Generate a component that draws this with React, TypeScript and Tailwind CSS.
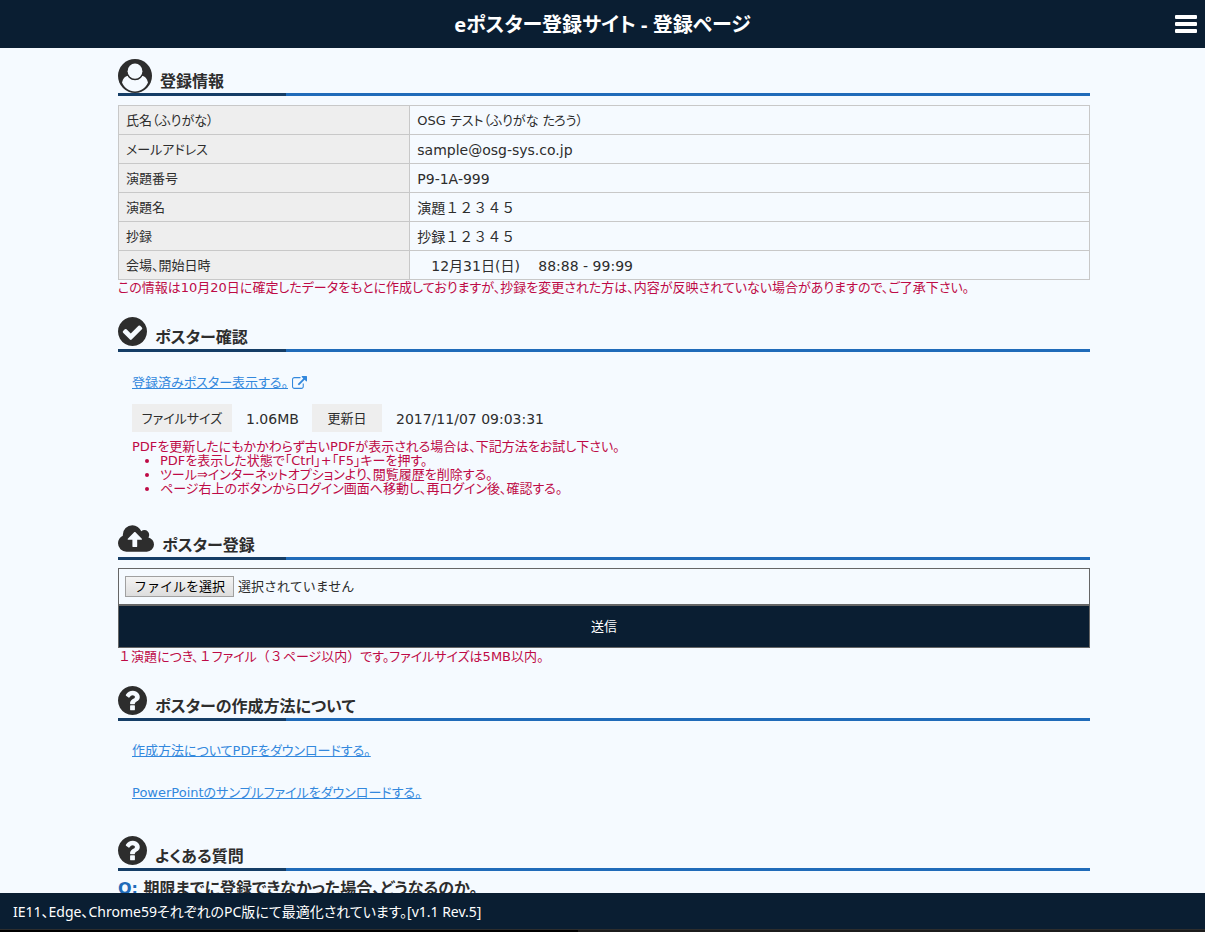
import React, { useRef, useState } from "react";

const CIRCLE =
  "m384 192q0 209-103 385.5t-279.5 279.5-385.5 103-385.5-103-279.5-279.5-103-385.5 103-385.5 279.5-279.5 385.5-103 385.5 103 279.5 279.5 103 385.5z";

const UserIcon = () => (
  <svg className="w-[34px] h-[34px] shrink-0" viewBox="0 0 34 34" aria-hidden="true">
    <circle cx="17" cy="17" r="17" fill="#2d2d2d" />
    <path d="M4 23.5C5 19.6 7 17.4 9.8 16.8C11.6 19.4 14 20.7 17 20.7C20 20.7 22.4 19.4 24.2 16.8C27 17.4 29 19.6 30 23.5C27.6 29 22.8 32.4 17 32.4C11.2 32.4 6.4 29 4 23.5Z" fill="#f5faff" />
    <ellipse cx="17" cy="12.4" rx="8.6" ry="8.9" fill="#2d2d2d" />
    <ellipse cx="17" cy="12.2" rx="7.4" ry="7.6" fill="#f5faff" />
  </svg>
);

const CheckIcon = () => (
  <svg className="w-[29px] h-[29px] mb-[3px] shrink-0" viewBox="128 128 1536 1536" fill="#2d2d2d" aria-hidden="true">
    <path d="M1412 734q0-28-18-46l-91-90q-19-19-45-19t-45 19l-408 407-226-226q-19-19-45-19t-45 19l-91 90q-18 18-18 46 0 27 18 45l362 362q19 19 45 19 27 0 46-19l543-543q18-18 18-45zm252 162q0 209-103 385.5t-279.5 279.5-385.5 103-385.5-103-279.5-279.5-103-385.5 103-385.5 279.5-279.5 385.5-103 385.5 103 279.5 279.5 103 385.5z" />
  </svg>
);

const QuestionIcon = () => (
  <svg className="w-[29px] h-[29px] mb-[3px] shrink-0" viewBox="128 128 1536 1536" fill="#2d2d2d" aria-hidden="true">
    <path
      d={
        "M1024 1376v-192q0-14-9-23t-23-9h-192q-14 0-23 9t-9 23v192q0 14 9 23t23 9h192q14 0 23-9t9-23zm256-672q0-88-55.5-163t-138.5-116-170-41q-243 0-371 213-15 24 8 42l132 100q7 6 19 6 16 0 25-12 53-68 86-92 34-24 86-24 48 0 85.5 26t37.5 59q0 38-20 61t-68 45q-63 28-115.5 86.5t-52.5 125.5v36q0 14 9 23t23 9h192q14 0 23-9t9-23q0-19 21.5-49.5t54.5-49.5q32-18 49-28.5t46-35 44.5-48 28-60.5 12.5-81z" +
        CIRCLE
      }
    />
  </svg>
);

const CloudIcon = () => (
  <svg className="w-9 h-[27px] mb-[5px] shrink-0" viewBox="0 128 1920 1408" fill="#2d2d2d" aria-hidden="true">
    <path d="M1280 864q0-14-9-23l-352-352q-9-9-23-9t-23 9l-351 351q-10 12-10 24 0 14 9 23t23 9h224v352q0 13 9.5 22.5t22.5 9.5h192q13 0 22.5-9.5t9.5-22.5v-352h224q13 0 22.5-9.5t9.5-22.5zm640 288q0 159-112.5 271.5t-271.5 112.5h-1088q-185 0-316.5-131.5t-131.5-316.5q0-130 70-240t188-165q-2-30-2-43 0-212 150-362t362-150q156 0 285.5 87t188.5 231q71-62 166-62 106 0 181 75t75 181q0 76-41 138 130 31 213.5 135.5t83.5 238.5z" />
  </svg>
);

const ExternalIcon = () => (
  <svg className="w-[15px] h-[14px] shrink-0" viewBox="0 0 1792 1664" fill="#3388dd" aria-hidden="true">
    <path d="M1408 928v320q0 119-84.5 203.5t-203.5 84.5h-832q-119 0-203.5-84.5t-84.5-203.5v-832q0-119 84.5-203.5t203.5-84.5h704q14 0 23 9t9 23v64q0 14-9 23t-23 9h-704q-66 0-113 47t-47 113v832q0 66 47 113t113 47h832q66 0 113-47t47-113v-320q0-14 9-23t23-9h64q14 0 23 9t9 23zm384-864v512q0 26-19 45t-45 19-45-19l-176-176-652 652q-10 10-23 10t-23-10l-114-114q-10-10-10-23t10-23l652-652-176-176q-19-19-19-45t19-45 45-19h512q26 0 45 19t19 45z" />
  </svg>
);

const Heading = ({ icon, children }: { icon: React.ReactNode; children: React.ReactNode }) => (
  <div>
    <h2 className="flex items-end gap-2 h-9 text-base leading-[22px] font-bold">
      {icon}
      {children}
    </h2>
    <div className="h-[3px] bg-[#206bb9]">
      <div className="h-full w-[168px] bg-[#153d66]" />
    </div>
  </div>
);

const rows = [
  { label: "氏名（ふりがな）", value: "OSG テスト（ふりがな たろう）" },
  { label: "メールアドレス", value: "sample@osg-sys.co.jp", wide: true },
  { label: "演題番号", value: "P9-1A-999", wide: true },
  { label: "演題名", value: "演題１２３４５", wide: true },
  { label: "抄録", value: "抄録１２３４５", wide: true },
  { label: "会場、開始日時", value: "　12月31日(日)　 88:88 - 99:99", wide: true },
];

const App = () => {
  const fileRef = useRef<HTMLInputElement>(null);
  const [fileName, setFileName] = useState("");

  const handleFileChange = (event: React.ChangeEvent<HTMLInputElement>) => {
    setFileName(event.target.files?.[0]?.name ?? "");
  };

  return (
    <div
      lang="ja"
      className="h-screen flex flex-col bg-[#f5faff] text-[#2d2d2d] text-[13px] leading-[14px] font-['DejaVu_Sans','Noto_Sans_CJK_JP',sans-serif] [font-feature-settings:'palt']"
    >
      <header className="grid grid-cols-[1fr_auto_1fr] items-center h-12 shrink-0 px-2 bg-[#0a1e32] text-white">
        <h1 className="col-start-2 pt-[2px] text-xl font-bold font-['Noto_Sans','Noto_Sans_CJK_JP',sans-serif]">
          eポスター登録サイト - 登録ページ
        </h1>
        <button type="button" aria-label="メニュー" className="justify-self-end">
          <svg className="w-[22px] h-[18px]" viewBox="0 0 22 18" fill="currentColor">
            <rect y="0" width="22" height="4" rx="1" />
            <rect y="7" width="22" height="4" rx="1" />
            <rect y="14" width="22" height="4" rx="1" />
          </svg>
        </button>
      </header>

      <main className="flex-1 min-h-0 overflow-hidden">
        <div className="w-full max-w-[975px] mx-auto pl-[3px] pt-[9px]">
          <section>
            <Heading icon={<UserIcon />}>登録情報</Heading>
            <table className="w-full mt-[9px] border-collapse">
              <tbody>
                {rows.map((row) => (
                  <tr key={row.label} className="h-[29px]">
                    <th scope="row" className="w-[30%] px-[7px] pt-[3px] pb-px border border-[#c8c8c8] bg-[#eeeeee] text-left font-normal">
                      {row.label}
                    </th>
                    <td
                      className={`px-[7px] pt-[3px] pb-px border border-[#c8c8c8] ${
                        row.wide ? "text-[14px] leading-[14px] [font-feature-settings:normal]" : ""
                      }`}
                    >
                      {row.value}
                    </td>
                  </tr>
                ))}
              </tbody>
            </table>
            <p className="mt-px text-[#be0a46]">
              この情報は10月20日に確定したデータをもとに作成しておりますが、抄録を変更された方は、内容が反映されていない場合がありますので、ご了承下さい。
            </p>
          </section>

          <section className="mt-[18px]">
            <Heading icon={<CheckIcon />}>ポスター確認</Heading>
            <div className="px-[14px] pt-6">
              <a href="#poster" className="inline-flex items-center gap-1 text-[#3388dd]">
                <span className="underline">登録済みポスター表示する。</span>
                <ExternalIcon />
              </a>
              <dl className="flex items-center h-7 mt-[14px] mb-2">
                <dt className="flex items-center justify-center w-[100px] h-full pt-[2px] bg-[#eeeeee]">ファイルサイズ</dt>
                <dd className="w-20 px-[14px] pt-[2px] text-[14px]">1.06MB</dd>
                <dt className="flex items-center justify-center w-[70px] h-full pt-[2px] bg-[#eeeeee]">更新日</dt>
                <dd className="px-[14px] pt-[2px] text-[14px]">2017/11/07 09:03:31</dd>
              </dl>
              <div className="text-[#be0a46]">
                <p>PDFを更新したにもかかわらず古いPDFが表示される場合は、下記方法をお試し下さい。</p>
                <ul className="list-disc pl-7">
                  <li>PDFを表示した状態で「Ctrl」+「F5」キーを押す。</li>
                  <li>ツール⇒インターネットオプションより、閲覧履歴を削除する。</li>
                  <li>ページ右上のボタンからログイン画面へ移動し、再ログイン後、確認する。</li>
                </ul>
              </div>
            </div>
          </section>

          <section className="mt-[25px]">
            <Heading icon={<CloudIcon />}>ポスター登録</Heading>
            <form className="mt-2" onSubmit={(event) => event.preventDefault()}>
              <div className="flex items-center gap-1 h-[37px] px-[6px] border border-[#666666]">
                <button
                  type="button"
                  onClick={() => fileRef.current?.click()}
                  className="h-[21px] px-2 border border-[#a0a0a0] bg-linear-to-b from-[#f4f4f4] to-[#dddddd] text-black [font-feature-settings:normal]"
                >
                  ファイルを選択
                </button>
                <label htmlFor="posterFile" className="[font-feature-settings:normal]">
                  {fileName || "選択されていません"}
                </label>
                <input ref={fileRef} id="posterFile" type="file" accept=".pdf" onChange={handleFileChange} className="hidden" />
              </div>
              <button type="submit" className="block w-full h-[43px] border border-[#666666] bg-[#0a1e32] text-white">
                送信
              </button>
            </form>
            <p className="mt-[2px] text-[#be0a46]">
              <span className="[font-feature-settings:normal]">１</span>演題につき、
              <span className="[font-feature-settings:normal]">１</span>ファイル
              <span className="[font-feature-settings:normal]">（３</span>ページ以内
              <span className="[font-feature-settings:normal]">）</span>です。ファイルサイズは5MB以内。
            </p>
          </section>

          <section className="mt-[18px]">
            <Heading icon={<QuestionIcon />}>ポスターの作成方法について</Heading>
            <div className="flex flex-col items-start gap-7 px-[14px] pt-[23px]">
              <a href="#howto" className="text-[#3388dd] underline">作成方法についてPDFをダウンロードする。</a>
              <a href="#sample" className="text-[#3388dd] underline">PowerPointのサンプルファイルをダウンロードする。</a>
            </div>
          </section>

          <section className="mt-8">
            <Heading icon={<QuestionIcon />}>よくある質問</Heading>
            <p className="mt-[6px] text-base leading-6 font-bold">
              <span className="text-[#206bb9]">Q:</span> 期限までに登録できなかった場合、どうなるのか。
            </p>
          </section>
        </div>
      </main>

      <footer className="shrink-0 bg-[#0a1e32] text-white">
        <p className="px-[13px] pt-3 pb-[10px] text-[14px] leading-[14px] font-['Noto_Sans','Noto_Sans_CJK_JP',sans-serif]">
          IE11、Edge、Chrome59それぞれのPC版にて最適化されています。[v1.1 Rev.5]
        </p>
        <div className="h-[3px] border-t border-[#2d2d2d] bg-[#1c1c1c]">
          <div className="h-full w-[48%] bg-black" />
        </div>
      </footer>
    </div>
  );
};

export default App;
